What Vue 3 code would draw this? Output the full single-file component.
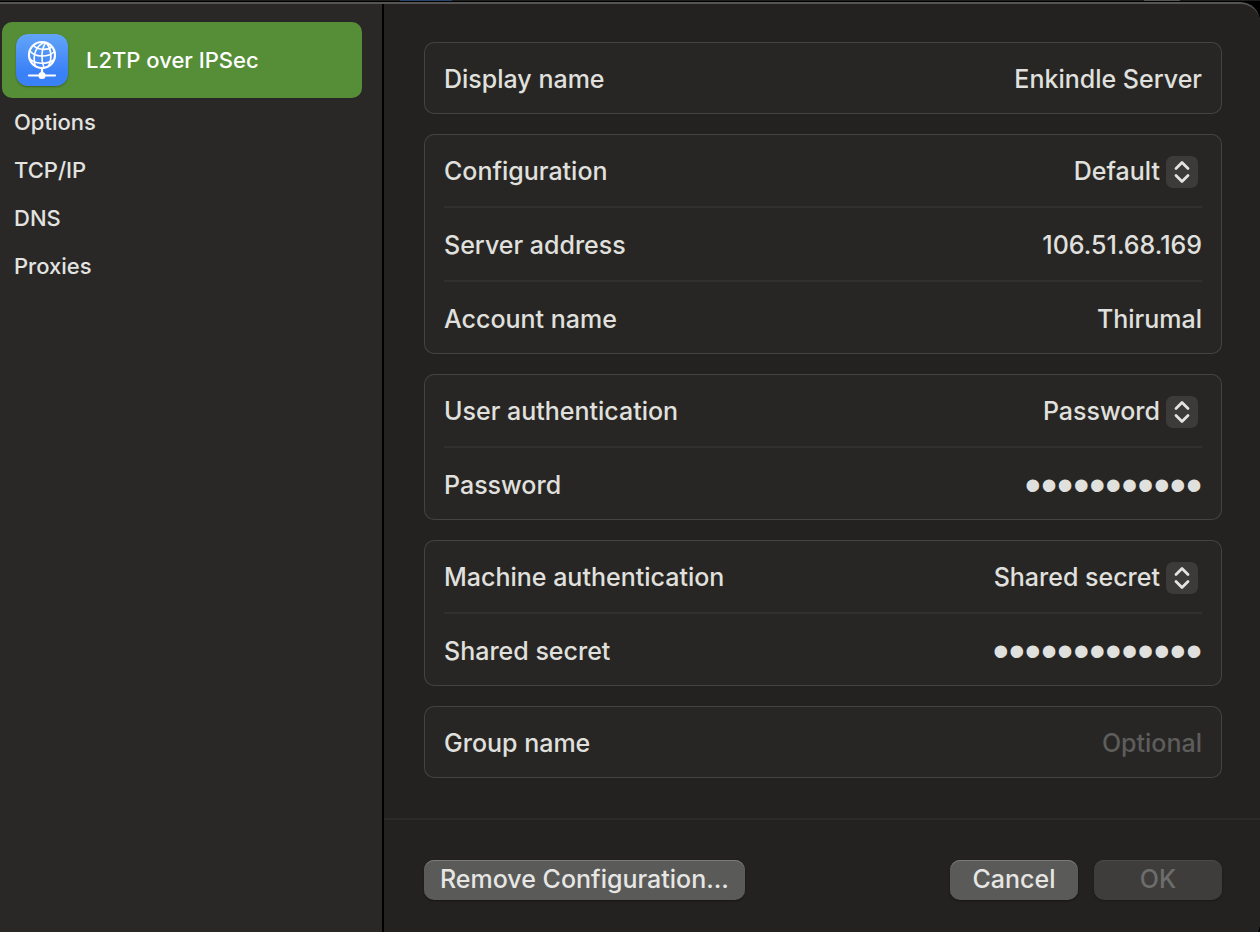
<script setup>
import { ref } from 'vue'

const sections = ['Options', 'TCP/IP', 'DNS', 'Proxies']

const groups = ref([
  [{ id: 'display', label: 'Display name', type: 'text', value: 'Enkindle Server' }],
  [
    { id: 'config', label: 'Configuration', type: 'select', value: 'Default' },
    { id: 'server', label: 'Server address', type: 'text', value: '106.51.68.169' },
    { id: 'account', label: 'Account name', type: 'text', value: 'Thirumal' }
  ],
  [
    { id: 'userauth', label: 'User authentication', type: 'select', value: 'Password' },
    { id: 'password', label: 'Password', type: 'password', value: 'x'.repeat(11) }
  ],
  [
    { id: 'machineauth', label: 'Machine authentication', type: 'select', value: 'Shared secret' },
    { id: 'secret', label: 'Shared secret', type: 'password', value: 'x'.repeat(13) }
  ],
  [{ id: 'group', label: 'Group name', type: 'text', value: '', placeholder: 'Optional' }]
])
</script>

<template>
  <div class="desktop">
    <div class="behind"><span class="behind-blue"></span><span class="behind-grey"></span></div>
    <div class="sheet">
      <nav class="sidebar">
        <a class="current" href="#l2tp" aria-current="page">
          <svg class="badge" viewBox="0 0 52 52" aria-hidden="true">
            <defs>
              <linearGradient id="blue" x1="0" y1="0" x2="0" y2="1">
                <stop offset="0" stop-color="#62a5f8" />
                <stop offset="0.75" stop-color="#3a80f7" />
                <stop offset="1" stop-color="#3a80f7" />
              </linearGradient>
            </defs>
            <rect width="52" height="52" rx="12" fill="url(#blue)" />
            <g fill="none" stroke="#fff" stroke-width="1.6" stroke-linecap="round">
              <circle cx="26" cy="21" r="13" stroke-width="2.2" />
              <path d="M28 8.500C20 12 16.500 21 19 31" />
              <path d="M30 8.500C25.500 14 24.500 25 28 34" />
              <path d="M30 8.500C35 14 36.500 23 33 31" />
              <path d="M17.500 11.500C21 15.500 30 17 36 13" />
              <path d="M14 17C19 23.500 32 23.500 38 18" />
              <path d="M14 25C19 30 30 31 37.500 26" />
              <path d="M26 34V40" stroke-width="2.2" />
              <path d="M13 41.500H39" stroke-width="2.2" />
            </g>
            <circle cx="26" cy="41.500" r="3.600" fill="#fff" />
          </svg>
          <span>L2TP over IPSec</span>
        </a>
        <a v-for="s in sections" :key="s" class="item" :href="'#' + s">{{ s }}</a>
      </nav>

      <form class="panel" @submit.prevent>
        <div class="groups">
          <section v-for="(rows, i) in groups" :key="i" class="card">
            <div v-for="row in rows" :key="row.id" class="row">
              <label :for="row.id">{{ row.label }}</label>
              <div v-if="row.type === 'select'" class="picker">
                <select :id="row.id" v-model="row.value">
                  <option>{{ row.value }}</option>
                </select>
                <svg class="chevrons" viewBox="0 0 32 32" aria-hidden="true">
                  <rect width="32" height="32" rx="7" fill="#3c3b3a" />
                  <path d="M10 12.500L16 6.500L22 12.500M10 19.500L16 25.500L22 19.500" fill="none" stroke="#e3e3e1" stroke-width="2.800" stroke-linecap="round" stroke-linejoin="round" />
                </svg>
              </div>
              <input v-else :id="row.id" v-model="row.value" :type="row.type" :placeholder="row.placeholder" autocomplete="off" />
            </div>
          </section>
        </div>
        <footer class="actions">
          <button type="button" class="remove">Remove Configuration...</button>
          <button type="button">Cancel</button>
          <button type="submit" disabled>OK</button>
        </footer>
      </form>
    </div>
  </div>
</template>

<style>
body {
  background: #000;
}
</style>

<style scoped>
.desktop {
  height: 100vh;
  overflow: hidden;
  background: #000;
  font-family: Inter, "Liberation Sans", sans-serif;
  font-weight: 500;
  color: #e0e0de;
}
.behind {
  display: flex;
  justify-content: space-between;
  height: 1px;
  padding: 0 80px 0 400px;
  background: #1d1d1c;
}
.behind-blue {
  width: 52px;
  background: #27456f;
}
.behind-grey {
  width: 36px;
  background: #545452;
}
.sheet {
  display: flex;
  box-sizing: border-box;
  min-height: calc(100vh + 8px);
  margin-top: 1px;
  overflow: hidden;
  border-top: 2px solid #555553;
  border-bottom: 1px solid #555553;
  border-radius: 0 20px 20px 0;
  background: #232220;
}
.sidebar {
  box-sizing: border-box;
  flex: 0 0 384px;
  padding: 18px 20px 0 2px;
  border-right: 2px solid #000;
  background: #292826;
  font-size: 22px;
}
.current,
.item {
  display: flex;
  align-items: center;
  color: #e3e3e1;
  text-decoration: none;
}
.current {
  gap: 18px;
  height: 76px;
  padding-left: 14px;
  border-radius: 10px;
  background: #558e37;
  color: #fff;
}
.badge {
  width: 52px;
  height: 52px;
  border-radius: 12px;
  box-shadow: 0 1px 2px rgba(0, 0, 0, 0.3);
}
.item {
  height: 48px;
  padding-left: 12px;
}
.panel {
  display: flex;
  flex: 1;
  flex-direction: column;
  min-width: 0;
  font-size: 25px;
}
.groups {
  display: flex;
  flex-direction: column;
  gap: 20px;
  padding: 38px 38px 40px 40px;
}
.card {
  padding: 0 20px;
  border-radius: 10px;
  background: #272624;
  box-shadow: inset 0 0 0 1px #434341;
}
.row {
  display: flex;
  align-items: center;
  gap: 20px;
  height: 70px;
  padding-top: 2px;
}
.row + .row {
  border-top: 2px solid #31302e;
}
label {
  flex: none;
}
input,
select {
  flex: 1;
  min-width: 0;
  margin: 0;
  padding: 0;
  border: 0;
  outline: 0;
  background: transparent;
  color: inherit;
  font: inherit;
  text-align: right;
}
input[type="password"] {
  font-family: "Liberation Sans", Arial, sans-serif;
  font-size: 46px;
  font-weight: 400;
}
input::placeholder {
  color: #5d5d5b;
  opacity: 1;
}
.picker {
  position: relative;
  display: flex;
  flex: 1;
  align-items: center;
  height: 34px;
}
select {
  padding-right: 42px;
  appearance: none;
  text-align-last: right;
}
.chevrons {
  position: absolute;
  right: 4px;
  bottom: 0;
  width: 32px;
  height: 32px;
  pointer-events: none;
}
.actions {
  display: flex;
  gap: 16px;
  padding: 40px 38px 40px 40px;
  border-top: 2px solid #2c2b29;
}
button {
  min-width: 128px;
  height: 40px;
  padding: 0 16px 2px;
  border: 0;
  border-radius: 10px;
  background: #5a5a58;
  box-shadow: inset 0 1px 0 #7b7b79, 0 1px 2px rgba(0, 0, 0, 0.4);
  color: #e6e6e4;
  font: inherit;
}
.remove {
  margin-right: auto;
}
button:disabled {
  background: #3e3d3b;
  box-shadow: inset 0 1px 0 #4b4b49, 0 1px 2px rgba(0, 0, 0, 0.3);
  color: #6d6d6b;
}
</style>
